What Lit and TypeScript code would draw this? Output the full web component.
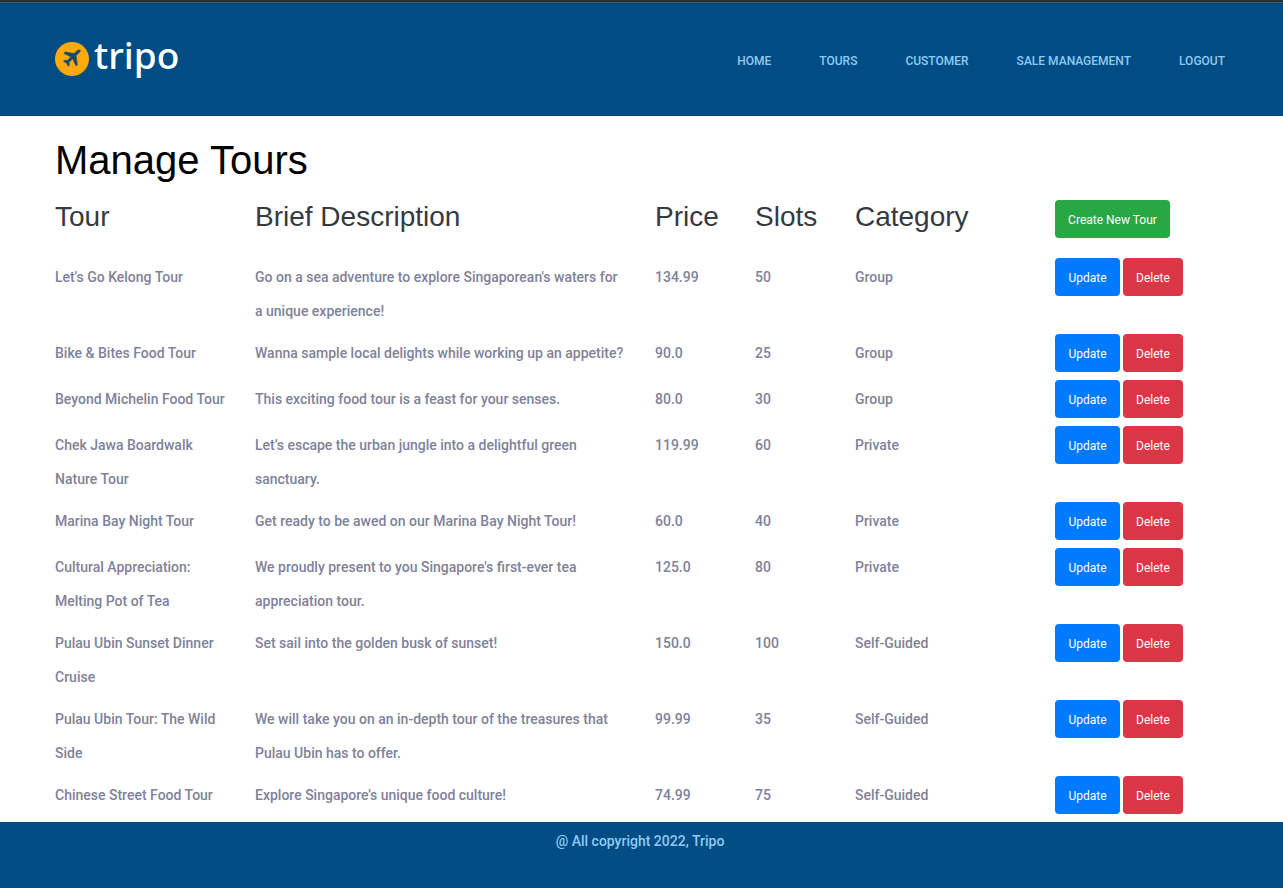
import { LitElement, html, css } from "lit";
import { customElement } from "lit/decorators.js";

interface Tour {
  name: string;
  brief: string;
  price: string;
  slots: number;
  category: string;
}

const TOURS: Tour[] = [
  { name: "Let's Go Kelong Tour", brief: "Go on a sea adventure to explore Singaporean's waters for a unique experience!", price: "134.99", slots: 50, category: "Group" },
  { name: "Bike & Bites Food Tour", brief: "Wanna sample local delights while working up an appetite?", price: "90.0", slots: 25, category: "Group" },
  { name: "Beyond Michelin Food Tour", brief: "This exciting food tour is a feast for your senses.", price: "80.0", slots: 30, category: "Group" },
  { name: "Chek Jawa Boardwalk Nature Tour", brief: "Let’s escape the urban jungle into a delightful green sanctuary.", price: "119.99", slots: 60, category: "Private" },
  { name: "Marina Bay Night Tour", brief: "Get ready to be awed on our Marina Bay Night Tour!", price: "60.0", slots: 40, category: "Private" },
  { name: "Cultural Appreciation: Melting Pot of Tea", brief: "We proudly present to you Singapore's first-ever tea appreciation tour.", price: "125.0", slots: 80, category: "Private" },
  { name: "Pulau Ubin Sunset Dinner Cruise", brief: "Set sail into the golden busk of sunset!", price: "150.0", slots: 100, category: "Self-Guided" },
  { name: "Pulau Ubin Tour: The Wild Side", brief: "We will take you on an in-depth tour of the treasures that Pulau Ubin has to offer.", price: "99.99", slots: 35, category: "Self-Guided" },
  { name: "Chinese Street Food Tour", brief: "Explore Singapore’s unique food culture!", price: "74.99", slots: 75, category: "Self-Guided" },
];

const LINKS = ["Home", "Tours", "Customer", "Sale Management", "Logout"];

@customElement("app-root")
export class AppRoot extends LitElement {
  static styles = css`
    :host {
      display: flex;
      flex-direction: column;
      min-height: 100vh;
      box-sizing: border-box;
      background: #fff;
      font-family: "Roboto", sans-serif;
      font-size: 14px;
      font-weight: 500;
      line-height: 34px;
      color: #7f8299;
    }
    .header,
    .main,
    .footer {
      padding-right: 3px;
    }
    .header {
      background: #004d85;
      border-top: 2px solid #2f2f2f;
      box-shadow: inset 0 1px #3a5a72;
    }
    .container {
      box-sizing: border-box;
      max-width: 1200px;
      margin: 0 auto;
    }
    .bar {
      display: flex;
      align-items: center;
      justify-content: space-between;
      padding: 0 15px;
      height: 114px;
    }
    .logo {
      display: flex;
      align-items: center;
      gap: 5px;
      color: #fff;
      text-decoration: none;
      font-family: "Noto Sans", sans-serif;
      font-size: 37px;
      font-weight: 500;
    }
    .mark {
      display: block;
      width: 34px;
      height: 34px;
    }
    .word {
      padding-bottom: 8px;
    }
    .nav {
      display: flex;
      gap: 48px;
      padding-top: 4px;
    }
    .link {
      color: #90caf4;
      text-decoration: none;
      text-transform: uppercase;
      font-size: 12px;
    }
    .main {
      padding-top: 20px;
    }
    .title {
      margin: 0 0 16px;
      padding: 0 15px;
      font: 400 40px/48px "Liberation Sans", Arial, sans-serif;
      color: #000;
    }
    .tours {
      width: 100%;
      table-layout: fixed;
      border-collapse: collapse;
    }
    .narrow {
      width: 8.3333%;
    }
    .mid {
      width: 16.6667%;
    }
    .wide {
      width: 33.3333%;
    }
    .head {
      height: 58px;
      padding: 0 15px;
      box-sizing: border-box;
      text-align: left;
      vertical-align: top;
      white-space: nowrap;
      font: 400 28px/34px "Liberation Sans", Arial, sans-serif;
      color: #343a40;
    }
    .cell {
      padding: 2px 15px 6px;
      vertical-align: top;
    }
    .tools {
      padding: 0 15px 8px;
      vertical-align: top;
    }
    .actions {
      display: flex;
      gap: 3px;
    }
    .btn {
      box-sizing: border-box;
      height: 38px;
      padding: 2px 0 0;
      border: 0;
      border-radius: 4px;
      color: #fff;
      font: 400 12px/24px "Roboto", sans-serif;
      cursor: pointer;
    }
    .create {
      display: block;
      width: 115px;
      background: #28a745;
    }
    .update {
      width: 65px;
      background: #007bff;
    }
    .delete {
      width: 60px;
      background: #dc3545;
    }
    .footer {
      flex: 1;
      min-height: 65px;
      box-sizing: border-box;
      background: #004d85;
      color: #90caf4;
      text-align: center;
    }
    .copy {
      margin: 0;
      padding-top: 2px;
    }
  `;

  render() {
    return html`
      <header class="header">
        <div class="container bar">
          <a class="logo" href="#">
            <svg class="mark" viewBox="0 0 34 34" aria-hidden="true">
              <circle cx="17" cy="17" r="17" fill="#ffa90a" />
              <path
                fill="#14486f"
                stroke="#14486f"
                stroke-width="0.6"
                stroke-linejoin="round"
                d="M25.3 8.300c-1-.7-2.600-.2-3.700.8l-2.500 2.400-9-1.500-1.300 1.300 7 3.500-3.500 3.700-2.800-.3-1.100 1.100 3.200 1.700 1.500 3.300 1.200-1.200-.2-2.900 3.600-3.400 3.400 7.200 1.300-1.300-1.400-9 2.600-2.500c1.200-1.100 2.300-2.200 1.700-2.900z"
              />
            </svg>
            <span class="word">tripo</span>
          </a>
          <nav class="nav">
            ${LINKS.map((label) => html`<a class="link" href="#">${label}</a>`)}
          </nav>
        </div>
      </header>
      <main class="main">
        <div class="container">
          <h1 class="title">Manage Tours</h1>
          <table class="tours">
            <colgroup>
              <col class="mid" />
              <col class="wide" />
              <col class="narrow" />
              <col class="narrow" />
              <col class="mid" />
              <col class="mid" />
            </colgroup>
            <thead>
              <tr>
                <th class="head" scope="col">Tour</th>
                <th class="head" scope="col">Brief Description</th>
                <th class="head" scope="col">Price</th>
                <th class="head" scope="col">Slots</th>
                <th class="head" scope="col">Category</th>
                <td class="head"><button class="btn create" type="button">Create New Tour</button></td>
              </tr>
            </thead>
            <tbody>
              ${TOURS.map(
                (t) => html`
                  <tr>
                    <td class="cell">${t.name}</td>
                    <td class="cell">${t.brief}</td>
                    <td class="cell">${t.price}</td>
                    <td class="cell">${t.slots}</td>
                    <td class="cell">${t.category}</td>
                    <td class="tools">
                      <div class="actions">
                        <button class="btn update" type="button">Update</button>
                        <button class="btn delete" type="button">Delete</button>
                      </div>
                    </td>
                  </tr>
                `
              )}
            </tbody>
          </table>
        </div>
      </main>
      <footer class="footer">
        <p class="copy">@ All copyright 2022, Tripo</p>
      </footer>
    `;
  }
}
